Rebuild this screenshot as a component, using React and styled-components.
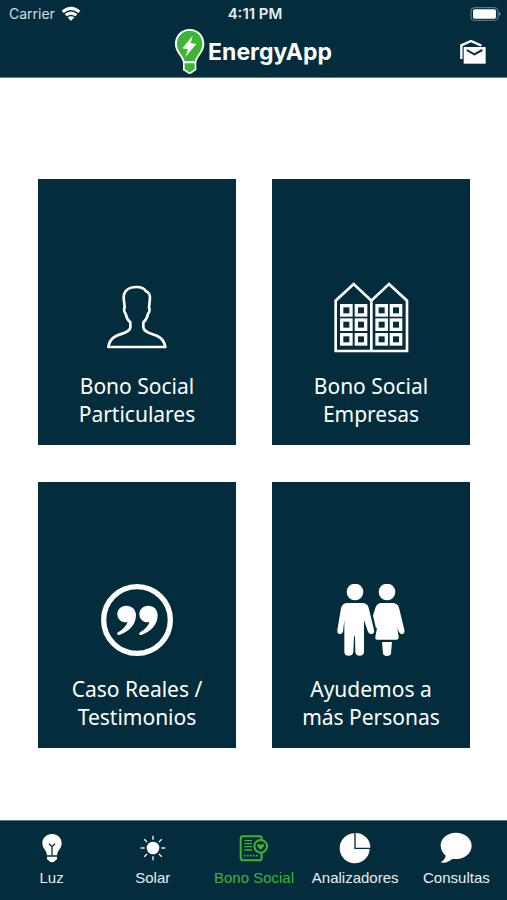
import React from 'react';
import styled, { createGlobalStyle } from 'styled-components';

const navy = '#032d3c';
const green = '#3fb535';
const edge = '#5f7d87';

const GlobalStyle = createGlobalStyle`
    * {
        box-sizing: border-box;
    }
    body {
        margin: 0;
        background: #fff;
    }
`

const WifiIcon = () => (
    <svg width='20' height='16' viewBox='183 15 60 48' fill='#fff' aria-hidden='true'>
        <path d='M185 29 Q213 5 241 29 L235 36 Q213 18 191 36Z' />
        <path d='M194 39 Q213 24 232 39 L226 46 Q213 36 200 46Z' />
        <path d='M203 49 Q213 42 223 49 L213 60Z' />
    </svg>
)

const BatteryIcon = () => (
    <svg width='31' height='14' viewBox='150 18 93 42' aria-hidden='true'>
        <rect x='153' y='20' width='81' height='38' rx='10' fill='none' stroke='#6f868f' strokeWidth='3' />
        <rect x='159' y='25' width='69' height='28' rx='5' fill='#fff' />
        <path d='M237 33 Q242 36 242 39 Q242 42 237 45Z' fill='#6f868f' />
    </svg>
)

const LogoIcon = () => (
    <svg width='30' height='46' viewBox='30 87 90 138' aria-hidden='true'>
        <path
            d='M74 87 C48 87 30 107 30 131 C30 149 39 158 46 170 C51 178 53 182 54 188 L54 209 Q55 213 60 214 L68 220 Q74 224 80 220 L88 214 Q93 213 94 209 L94 188 C95 181 98 176 103 168 C110 157 118 148 118 131 C118 107 100 87 74 87Z'
            fill='#fff'
        />
        <path
            d='M74 92 C51 92 36 110 36 131 C36 147 44 156 50 166 C55 174 57 178 59 184 L89 184 C91 178 94 173 98 166 C104 156 112 147 112 131 C112 110 97 92 74 92Z'
            fill={green}
        />
        <path d='M59 190 H89 V207 Q88 210 84 211 L77 216 Q74 218 71 216 L64 211 Q60 210 59 207Z' fill={green} />
        <path d='M83 107 L52 145 L69 148 L61 171 L94 132 L77 129Z' fill='#fff' />
    </svg>
)

const MailIcon = () => (
    <svg width='27' height='24' viewBox='120 120 81 72' aria-hidden='true'>
        <path d='M124 177 V136 L153 123 L184 137' fill='none' stroke='#fff' strokeWidth='7' />
        <rect x='131' y='141' width='66' height='50' fill='#fff' />
        <path d='M140 150 L163 163 L187 150' fill='none' stroke={navy} strokeWidth='6' />
    </svg>
)

const PersonIcon = () => (
    <svg width='72' height='72' viewBox='33 33 216 216' fill='none' stroke='#fff' strokeWidth='8' strokeLinejoin='round' aria-hidden='true'>
        <path d='M140 51 C116 51 101 63 101 84 L104 113 C101 117 102 127 107 131 C109 143 114 151 121 157 L121 173 C118 187 96 190 78 198 C62 206 57 218 55 231 L226 231 C224 218 218 206 202 198 C184 190 163 187 160 173 L160 157 C167 151 172 143 174 131 C179 127 180 117 177 113 L180 84 C180 74 176 67 168 64 C163 55 153 51 140 51Z' />
    </svg>
)

const floors = [107, 150, 194];
const columns = [65, 109, 171, 214];

const BuildingsIcon = () => (
    <svg width='76' height='72' viewBox='39 33 228 216' fill='none' stroke='#fff' strokeWidth='8' aria-hidden='true'>
        <path d='M154 243 H47 V92 L101 42 L154 92 L207 42 L261 92 V243Z M154 92 V243' />
        {floors.map(y => columns.map(x => (
            <rect key={`${x}-${y}`} x={x} y={y} width='28' height='28' strokeWidth='10' />
        )))}
    </svg>
)

const QuoteIcon = () => (
    <svg width='74' height='74' viewBox='29 24 222 222' aria-hidden='true'>
        <circle cx='140' cy='135' r='100' fill='none' stroke='#fff' strokeWidth='16' />
        <path d='M107 92 C92 92 81 103 81 117 C81 132 92 142 106 142 C108 142 110 142 112 141 C107 154 97 164 83 172 C78 176 81 181 87 180 C116 171 137 148 137 121 C137 103 124 92 107 92Z' fill='#fff' />
        <path d='M173 92 C158 92 147 103 147 117 C147 132 158 142 172 142 C174 142 176 142 178 141 C173 154 163 164 149 172 C144 176 147 181 153 180 C182 171 202 148 202 121 C202 103 190 92 173 92Z' fill='#fff' />
    </svg>
)

const CoupleIcon = () => (
    <svg width='72' height='72' viewBox='45 27 216 216' fill='#fff' aria-hidden='true'>
        <circle cx='105' cy='51' r='25' />
        <circle cx='201' cy='51' r='25' />
        <path d='M84 84 H126 Q142 84 146 98 L162 164 Q164 174 156 177 Q148 179 144 170 L132 135 V231 Q131 242 119 242 Q107 242 106 231 L105 184 H102 L100 231 Q99 242 86 242 Q73 242 73 231 V135 L69 170 Q66 179 58 177 Q51 175 52 165 L63 100 Q66 84 84 84Z' />
        <path d='M184 84 H218 Q232 84 237 98 L253 164 Q255 174 248 177 Q241 179 237 171 L232 158 L236 186 Q236 194 229 194 H172 Q165 194 166 186 L171 158 L168 160 L159 122 L166 99 Q171 84 184 84Z' />
        <path d='M186 201 H216 L213 235 Q212 243 201 243 Q190 243 189 235Z' />
    </svg>
)

const BulbIcon = () => (
    <svg width='32' height='32' viewBox='107 66 96 96' aria-hidden='true'>
        <path d='M155 72 C138 72 126 84 126 100 C126 111 132 117 136 123 Q139 128 140 136 H170 Q171 128 174 123 C178 117 184 111 184 100 C184 84 172 72 155 72Z' fill='#fff' />
        <path d='M140 140 H170 V147 Q169 151 164 152 Q160 157 155 157 Q150 157 146 152 Q141 151 140 147Z' fill='#fff' />
        <path d='M155 136 V110 M146 101 L155 110 L164 101' fill='none' stroke={navy} strokeWidth='4' />
    </svg>
)

const rays = [0, 45, 90, 135, 180, 225, 270, 315];

const SunIcon = () => (
    <svg width='32' height='32' viewBox='411 66 96 96' aria-hidden='true'>
        <circle cx='459' cy='114' r='19' fill='#fff' />
        {rays.map(angle => (
            <path key={angle} d='M459 89 V77' stroke='#fff' strokeWidth='4' transform={`rotate(${angle} 459 114)`} />
        ))}
    </svg>
)

const BonoIcon = () => (
    <svg width='32' height='32' viewBox='116 66 96 96' fill='none' stroke='currentColor' strokeWidth='6' aria-hidden='true'>
        <path d='M187 89 V86 Q187 79 180 79 H131 Q124 79 124 86 V143 Q124 151 132 151 H180 Q187 151 187 143 V129' />
        <circle cx='184' cy='109' r='19' />
        <path d='M135 92 H158 M135 101 H158 M135 110 H158 M135 120 H158' strokeWidth='4' />
        <path d='M134 137 H180' strokeWidth='5' strokeDasharray='5 4' />
        <path d='M184 119 L175 110 Q172 103 178 102 Q182 102 184 106 Q186 102 190 102 Q196 103 193 110Z' fill='currentColor' stroke='none' />
    </svg>
)

const PieIcon = () => (
    <svg width='32' height='32' viewBox='419 66 96 96' fill='#fff' aria-hidden='true'>
        <path d='M465 70 A45 45 0 1 0 511 117 H465Z' />
        <path d='M469 69 A44 44 0 0 1 513 113 H469Z' />
    </svg>
)

const ChatIcon = () => (
    <svg width='32' height='32' viewBox='725 66 96 96' fill='#fff' aria-hidden='true'>
        <path d='M773 68 C747 68 727 85 727 106 C727 119 733 130 742 137 C741 146 735 152 727 157 C740 161 754 154 762 147 C796 150 820 132 820 107 C820 85 799 68 773 68Z' />
    </svg>
)

const cards = [
    { lines: ['Bono Social', 'Particulares'], Icon: PersonIcon },
    { lines: ['Bono Social', 'Empresas'], Icon: BuildingsIcon },
    { lines: ['Caso Reales /', 'Testimonios'], Icon: QuoteIcon },
    { lines: ['Ayudemos a', 'más Personas'], Icon: CoupleIcon },
];

const tabs = [
    { label: 'Luz', Icon: BulbIcon },
    { label: 'Solar', Icon: SunIcon },
    { label: 'Bono Social', Icon: BonoIcon, active: true },
    { label: 'Analizadores', Icon: PieIcon },
    { label: 'Consultas', Icon: ChatIcon },
];

function App() {
    return (
        <Screen>
            <GlobalStyle />
            <Header>
                <StatusBar>
                    <Carrier>Carrier <WifiIcon /></Carrier>
                    <Clock>4:11 PM</Clock>
                    <Battery><BatteryIcon /></Battery>
                </StatusBar>
                <TitleBar>
                    <Brand>
                        <LogoIcon />
                        <BrandName>EnergyApp</BrandName>
                    </Brand>
                    <MailButton type='button' aria-label='Mensajes'>
                        <MailIcon />
                    </MailButton>
                </TitleBar>
            </Header>

            <CardGrid>
                {cards.map(({ lines, Icon }) => (
                    <Card key={lines.join(' ')} type='button'>
                        <CardIcon><Icon /></CardIcon>
                        <CardLabel>{lines[0]}<br />{lines[1]}</CardLabel>
                    </Card>
                ))}
            </CardGrid>

            <TabBar>
                {tabs.map(({ label, Icon, active }) => (
                    <Tab key={label} href='#' $active={active} aria-current={active ? 'page' : undefined}>
                        <Icon />
                        <span>{label}</span>
                    </Tab>
                ))}
            </TabBar>
        </Screen>
    )
}

const Screen = styled.div`
    display: flex;
    flex-direction: column;
    min-height: 100vh;
`

const Header = styled.header`
    background: ${navy};
    border-bottom: 1px solid ${edge};
    color: #fff;
    font-family: Inter, sans-serif;
`

const StatusBar = styled.div`
    display: grid;
    grid-template-columns: 1fr auto 1fr;
    align-items: center;
    height: 27px;
    padding: 0 6px 0 9px;
    font-size: 14px;
    line-height: 20px;
`

const Carrier = styled.span`
    display: flex;
    align-items: center;
    gap: 6px;
    color: #d5dfe3;
`

const Clock = styled.span`
    font-size: 15px;
    font-weight: 600;
    color: #e8eef0;
`

const Battery = styled.span`
    display: flex;
    justify-content: flex-end;
`

const TitleBar = styled.div`
    display: grid;
    grid-template-columns: 1fr auto 1fr;
    align-items: center;
    height: 50px;
    padding: 0 20px;
`

const Brand = styled.div`
    grid-column: 2;
    display: flex;
    align-items: center;
    gap: 3px;
`

const BrandName = styled.h1`
    margin: 0;
    font-size: 23px;
    font-weight: 700;
    line-height: 28px;
`

const MailButton = styled.button`
    display: flex;
    justify-self: end;
    padding: 0;
    border: none;
    background: none;
    cursor: pointer;
`

const CardGrid = styled.main`
    flex: 1;
    display: grid;
    grid-template-columns: 1fr 1fr;
    grid-auto-rows: 1fr;
    gap: 37px 36px;
    padding: 101px 37px 72px 38px;
`

const Card = styled.button`
    display: flex;
    flex-direction: column;
    align-items: center;
    justify-content: flex-end;
    gap: 19px;
    min-height: 240px;
    padding: 0 8px 17px;
    border: none;
    background: ${navy};
    color: #fff;
    cursor: pointer;
`

const CardIcon = styled.span`
    display: flex;
    align-items: center;
    height: 72px;
`

const CardLabel = styled.span`
    font-family: 'Noto Sans', sans-serif;
    font-size: 21px;
    line-height: 28px;
`

const TabBar = styled.nav`
    display: grid;
    grid-template-columns: repeat(5, 1fr);
    height: 80px;
    padding: 11px 0 0 1px;
    border-top: 1px solid ${edge};
    background: ${navy};
`

const Tab = styled.a`
    display: flex;
    flex-direction: column;
    align-items: center;
    gap: 4px;
    color: ${props => (props.$active ? green : '#e8eef0')};
    font-family: 'Liberation Sans', Arial, sans-serif;
    font-size: 15px;
    line-height: 20px;
    text-decoration: none;
    white-space: nowrap;
`

export default App;
